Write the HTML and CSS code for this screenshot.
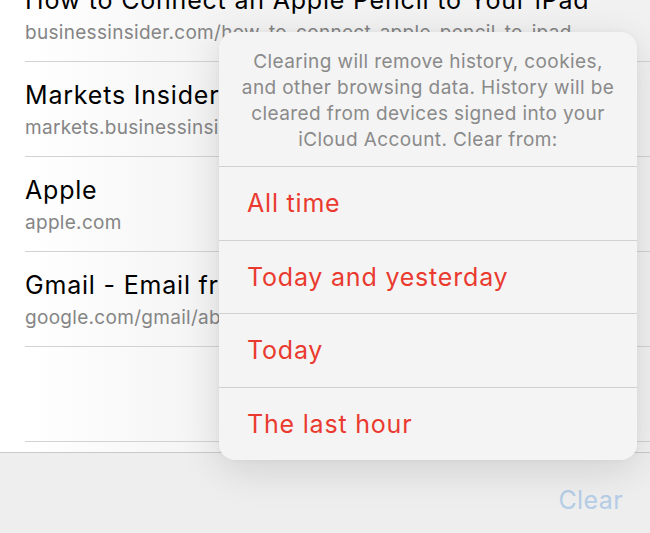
FILE: index.html
```html
<!DOCTYPE html>
<html lang="en">
<head>
    <meta charset="UTF-8">
    <meta name="viewport" content="width=device-width, initial-scale=1.0">
    <title>Clear History</title>
    <link rel="stylesheet" href="styles.css">
</head>
<body>
    <div class="page">
        <div class="list">
            <div class="rows">
                <div class="row">
                    <div class="title">How to Connect an Apple Pencil to Your iPad</div>
                    <div class="url">businessinsider.com/how-to-connect-apple-pencil-to-ipad</div>
                </div>
                <div class="row">
                    <div class="title">Markets Insider</div>
                    <div class="url">markets.businessinsider.com</div>
                </div>
                <div class="row">
                    <div class="title">Apple</div>
                    <div class="url">apple.com</div>
                </div>
                <div class="row">
                    <div class="title">Gmail - Email from Google</div>
                    <div class="url">google.com/gmail/about</div>
                </div>
                <div class="row"></div>
            </div>
        </div>
        <div class="toolbar">
            <span class="clear">Clear</span>
        </div>

        <div class="popover">
            <div class="message">
                Clearing will remove history, cookies,<br>
                and other browsing data. History will be<br>
                cleared from devices signed into your<br>
                iCloud Account. Clear from:
            </div>
            <div class="option">All time</div>
            <div class="option">Today and yesterday</div>
            <div class="option">Today</div>
            <div class="option">The last hour</div>
        </div>
    </div>
</body>
</html>
```

FILE: styles.css
```css
body {
    margin: 0;
    font-family: Inter, "Liberation Sans", Arial, sans-serif;
    background: #ededed;
}
.page {
    position: relative;
    width: 650px;
    height: 533px;
    overflow: hidden;
    display: flex;
    flex-direction: column;
}
.list {
    height: 453px;
    box-sizing: border-box;
    border-bottom: 1px solid #c9c9c9;
    background: linear-gradient(to right, #ffffff 0%, #ffffff 4%, #f3f3f3 35%, #f1f1f1 100%);
    overflow: hidden;
}
.rows {
    margin-top: -33px;
}
.row {
    margin-left: 25px;
    height: 95px;
    box-sizing: border-box;
    border-bottom: 1px solid #d2d2d2;
    padding-top: 17px;
    white-space: nowrap;
}
.title {
    font-size: 25px;
    line-height: 32px;
    letter-spacing: 0.8px;
    color: #000;
}
.url {
    margin-top: 5px;
    font-size: 19px;
    line-height: 24px;
    letter-spacing: 0.3px;
    color: #858585;
}
.toolbar {
    flex: 1;
    display: flex;
    justify-content: flex-end;
    align-items: center;
    padding-right: 27px;
    background: #eeeeee;
}
.clear {
    font-size: 25px;
    letter-spacing: 0.4px;
    color: #b5cde6;
    margin-top: 14px;
}
.popover {
    position: absolute;
    left: 219px;
    top: 32px;
    width: 418px;
    height: 428px;
    border-radius: 16px;
    background: #f4f4f4;
    box-shadow: 0 10px 40px rgba(0, 0, 0, 0.12), 0 0 6px rgba(0, 0, 0, 0.04);
    overflow: hidden;
}
.message {
    padding: 17px 0 13px;
    text-align: center;
    font-size: 19px;
    line-height: 26px;
    letter-spacing: 0.4px;
    color: #8a8a8a;
}
.option {
    height: 73.5px;
    box-sizing: border-box;
    border-top: 1px solid #d0d0d0;
    display: flex;
    align-items: center;
    padding-left: 28px;
    font-size: 25px;
    letter-spacing: 0.8px;
    color: #ea3a30;
}
```
